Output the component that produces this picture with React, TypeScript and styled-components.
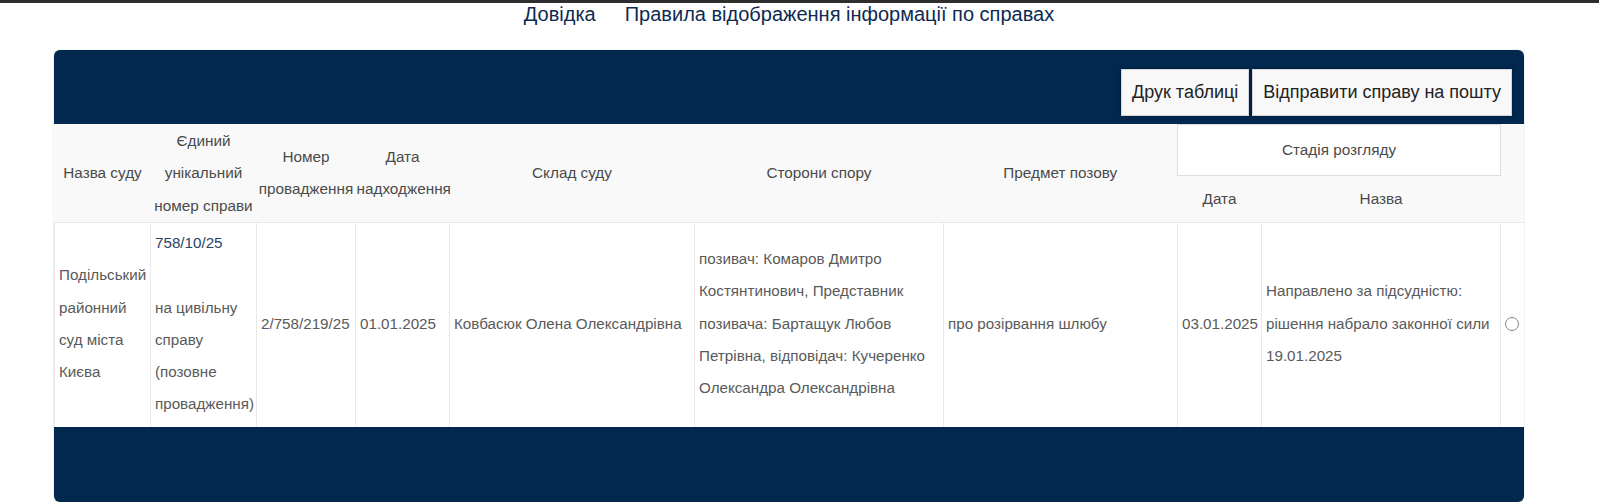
import React from "react";
import styled, { createGlobalStyle } from "styled-components";

const GlobalStyle = createGlobalStyle`
  html, body { margin: 0; padding: 0; background: #ffffff; }
  body { font-family: "Liberation Sans", Arial, sans-serif; }
`;

const NAVY = "#022850";

const TopStrip = styled.div`
  height: 3px;
  background: #2e2e2e;
`;

const Page = styled.div`
  width: 1470px;
  margin-left: 54px;
`;

const Nav = styled.nav`
  height: 47px;
  box-sizing: border-box;
  padding-top: 0;
  display: flex;
  justify-content: center;
  gap: 29px;
`;

const NavLink = styled.a`
  font-size: 20px;
  line-height: 23px;
  color: #0d2a52;
  text-decoration: none;
  cursor: pointer;
`;

const Panel = styled.section`
  border-radius: 6px;
  overflow: hidden;
  box-shadow: 0 0 1px rgba(2, 40, 80, 0.5);
  background: #ffffff;
`;

const Toolbar = styled.div`
  height: 74px;
  box-sizing: border-box;
  background: ${NAVY};
  display: flex;
  justify-content: flex-end;
  align-items: flex-start;
  gap: 3px;
  padding: 19px 12px 0;
`;

const ToolButton = styled.button`
  height: 47px;
  padding: 0 10px;
  margin: 0;
  border: 1px solid #d6d6d6;
  background: #f8f8f8;
  box-shadow: 0 0 3px rgba(0, 0, 0, 0.45);
  font-family: "Liberation Sans", Arial, sans-serif;
  font-size: 18px;
  color: #222222;
  cursor: pointer;
`;

const Table = styled.table`
  width: 1470px;
  table-layout: fixed;
  border-collapse: collapse;
  font-family: "Liberation Sans", Arial, sans-serif;
`;

const HeadRow = styled.tr<{ $h: number }>`
  height: ${(p) => p.$h}px;
`;

const Th = styled.th<{ $boxed?: boolean }>`
  font-weight: normal;
  font-size: 15.3px;
  line-height: 32.5px;
  color: #4a4a4a;
  text-align: center;
  vertical-align: middle;
  padding: 0 1px;
  background: ${(p) => (p.$boxed ? "#ffffff" : "#f9f9f9")};
  border: ${(p) => (p.$boxed ? "1px solid #dedede" : "none")};
`;

const Td = styled.td<{ $top?: boolean }>`
  font-size: 15.2px;
  line-height: 32.3px;
  color: #5a5a5a;
  vertical-align: ${(p) => (p.$top ? "top" : "middle")};
  padding: 4px 2px 6px 4px;
  border: 1px solid #e8e8e8;
  border-bottom: none;
  overflow: visible;
  white-space: normal;
`;

const CaseLink = styled.a`
  color: #2a4466;
  text-decoration: none;
`;

const Radio = styled.input`
  appearance: none;
  width: 14px;
  height: 14px;
  margin: 0;
  border: 1px solid #858585;
  border-radius: 50%;
  background: #ffffff;
  display: block;
`;

const Footer = styled.div`
  height: 75px;
  background: ${NAVY};
`;

const widths = [96, 106, 99, 94, 245, 249, 234, 84, 239, 24];

export default function App() {
  return (
    <>
      <GlobalStyle />
      <TopStrip />
      <Page>
        <Nav>
          <NavLink>Довідка</NavLink>
          <NavLink>Правила відображення інформації по справах</NavLink>
        </Nav>
        <Panel>
          <Toolbar>
            <ToolButton>Друк таблиці</ToolButton>
            <ToolButton>Відправити справу на пошту</ToolButton>
          </Toolbar>
          <Table>
            <colgroup>
              {widths.map((w, i) => (
                <col key={i} style={{ width: w }} />
              ))}
            </colgroup>
            <thead>
              <HeadRow $h={51}>
                <Th rowSpan={2}>Назва суду</Th>
                <Th rowSpan={2}>Єдиний унікальний номер справи</Th>
                <Th rowSpan={2}>Номер провадження</Th>
                <Th rowSpan={2}>Дата надходження</Th>
                <Th rowSpan={2}>Склад суду</Th>
                <Th rowSpan={2}>Сторони спору</Th>
                <Th rowSpan={2}>Предмет позову</Th>
                <Th colSpan={2} $boxed>
                  Стадія розгляду
                </Th>
                <Th rowSpan={2}></Th>
              </HeadRow>
              <HeadRow $h={47}>
                <Th>Дата</Th>
                <Th>Назва</Th>
              </HeadRow>
            </thead>
            <tbody>
              <tr>
                <Td>Подільський районний суд міста Києва</Td>
                <Td $top>
                  <CaseLink>758/10/25</CaseLink>
                  <br />
                  <br />
                  на цивільну справу (позовне провадження)
                </Td>
                <Td>2/758/219/25</Td>
                <Td>01.01.2025</Td>
                <Td>Ковбасюк Олена Олександрівна</Td>
                <Td>
                  позивач: Комаров Дмитро Костянтинович, Представник позивача: Бартащук Любов
                  Петрівна, відповідач: Кучеренко Олександра Олександрівна
                </Td>
                <Td>про розірвання шлюбу</Td>
                <Td>03.01.2025</Td>
                <Td>Направлено за підсудністю: рішення набрало законної сили 19.01.2025</Td>
                <Td>
                  <Radio type="radio" name="case" />
                </Td>
              </tr>
            </tbody>
          </Table>
          <Footer />
        </Panel>
      </Page>
    </>
  );
}
